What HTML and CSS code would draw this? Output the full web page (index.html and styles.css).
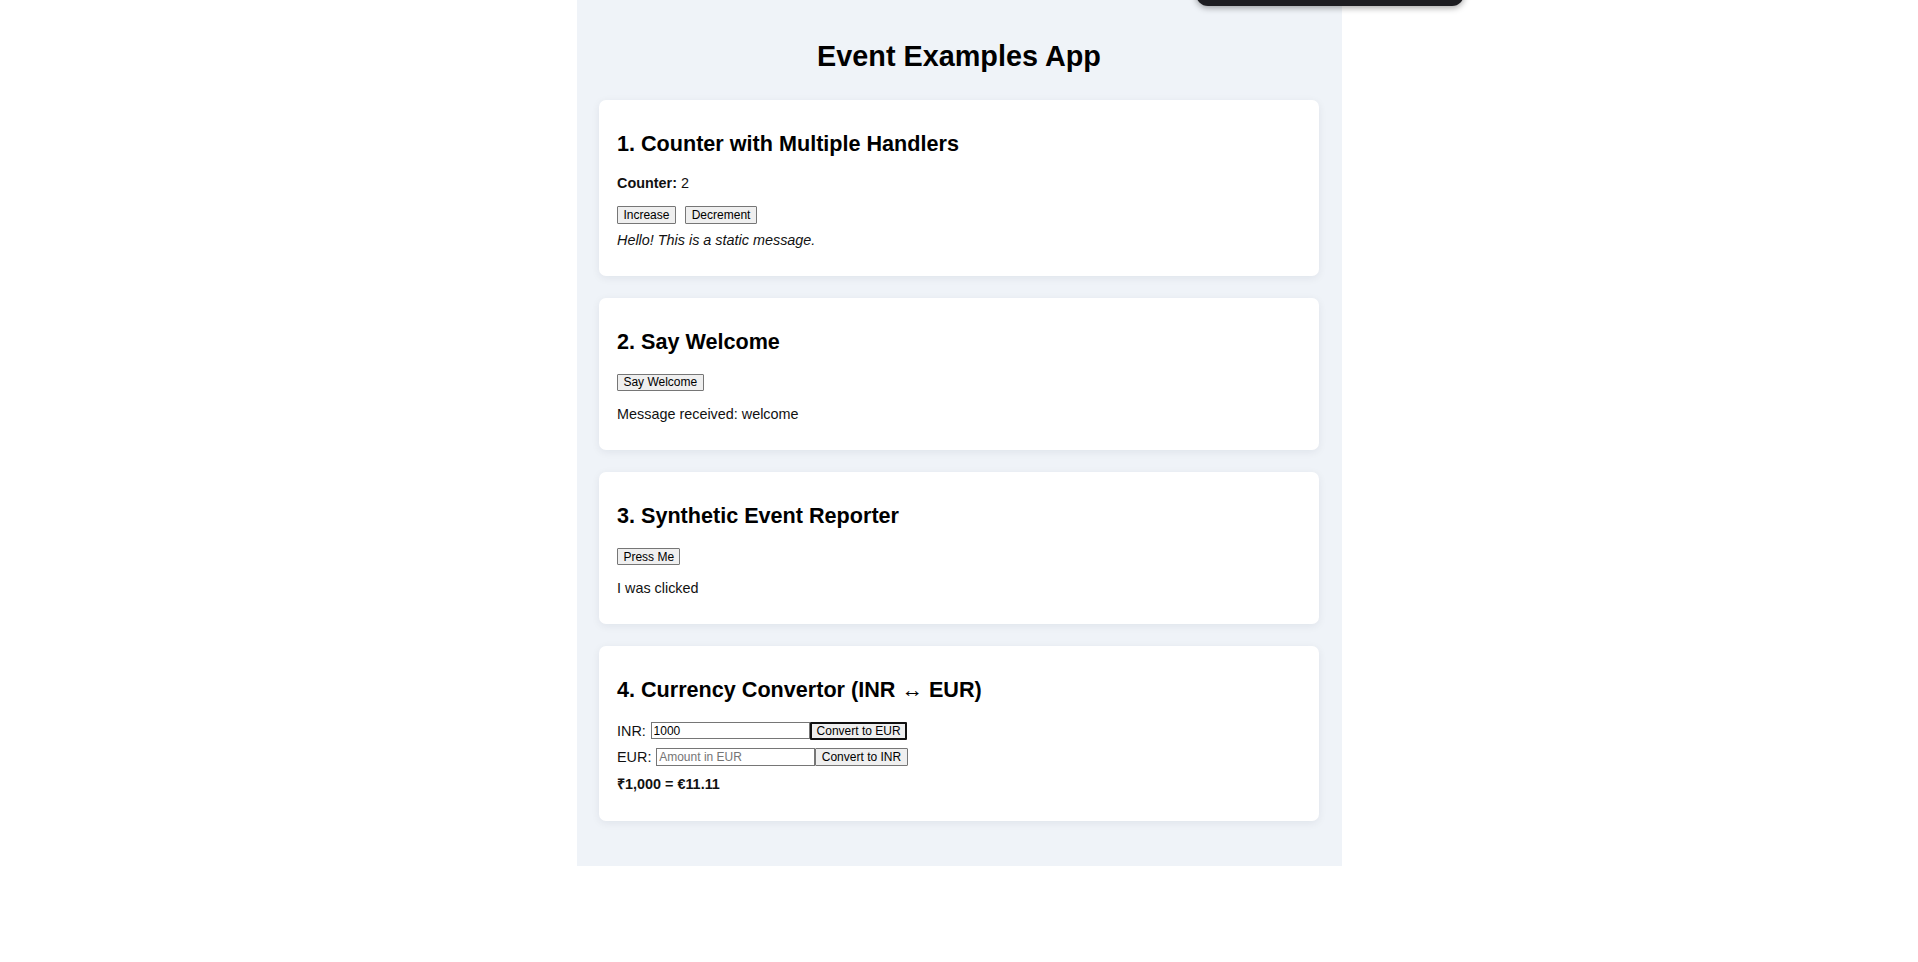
FILE: index.html
```html
<!DOCTYPE html>
<html lang="en">
<head>
<meta charset="utf-8">
<title>Event Examples App</title>
<link rel="stylesheet" href="styles.css">
</head>
<body>
<div class="toolbar"></div>
<main class="app">
  <h1 class="app-title">Event Examples App</h1>

  <section class="card">
    <h2 class="card-title">1. Counter with Multiple Handlers</h2>
    <p class="text"><strong>Counter:</strong> 2</p>
    <div class="btn-row">
      <button class="btn">Increase</button>
      <button class="btn">Decrement</button>
    </div>
    <p class="text static"><em>Hello! This is a static message.</em></p>
  </section>

  <section class="card">
    <h2 class="card-title">2. Say Welcome</h2>
    <div class="btn-row">
      <button class="btn">Say Welcome</button>
    </div>
    <p class="text">Message received: welcome</p>
  </section>

  <section class="card">
    <h2 class="card-title">3. Synthetic Event Reporter</h2>
    <div class="btn-row">
      <button class="btn">Press Me</button>
    </div>
    <p class="text">I was clicked</p>
  </section>

  <section class="card">
    <h2 class="card-title">4. Currency Convertor (INR ↔ EUR)</h2>
    <div class="conv-row">
      <span class="conv-label">INR:</span><input class="conv-input" type="text" value="1000"><button class="btn focused">Convert to EUR</button>
    </div>
    <div class="conv-row">
      <span class="conv-label">EUR:</span><input class="conv-input" type="text" placeholder="Amount in EUR"><button class="btn">Convert to INR</button>
    </div>
    <p class="text result"><strong>₹1,000 = €11.11</strong></p>
  </section>
</main>
</body>
</html>
```

FILE: styles.css
```css
html, body {
  margin: 0;
  padding: 0;
  background: #ffffff;
}

body {
  font-family: "Liberation Sans", Arial, sans-serif;
  font-size: 14.4px;
  color: #111;
}

.toolbar {
  position: fixed;
  top: -30px;
  left: 1196px;
  width: 268px;
  height: 36px;
  border-radius: 12px;
  background: #1d1d21;
  box-shadow: 0 2px 6px rgba(0, 0, 0, 0.35);
  z-index: 10;
}

.app {
  width: 765px;
  margin: 0 auto;
  box-sizing: border-box;
  padding: 20px 22.5px 23px;
  background: #eff3f8;
}

.app-title {
  margin: 19.5px 0 27.5px;
  font-size: 28.8px;
  font-weight: bold;
  text-align: center;
  color: #000;
  line-height: normal;
}

.card {
  background: #fff;
  border-radius: 7px;
  padding: 13.5px 18px;
  margin-bottom: 21.6px;
  box-shadow: 0 2px 8px rgba(20, 30, 60, 0.07);
}

.card-title {
  margin: 17.9px 0;
  font-size: 21.6px;
  font-weight: bold;
  color: #000;
  line-height: normal;
}

.text {
  margin: 14.4px 0;
  line-height: normal;
}

.card-title + .text {
  margin-top: 0;
}

.static {
  margin-top: 7.5px;
}

.btn-row {
  display: flex;
  align-items: center;
  gap: 9.5px;
  height: 19px;
}

.btn {
  font-family: "Liberation Sans", Arial, sans-serif;
  font-size: 12px;
  line-height: normal;
  color: #000;
  background: #efefef;
  border: 1px solid #767676;
  border-radius: 1px;
  padding: 0.9px 5.4px;
  margin: 0;
}

.btn.focused {
  border: 2px solid #111;
  padding: 0 4.8px;
}

.conv-row {
  display: flex;
  align-items: center;
  height: 18.5px;
  margin-bottom: 8px;
}

.conv-label {
  margin-right: 5px;
}

.conv-input {
  width: 159px;
  box-sizing: border-box;
  font-family: "Liberation Sans", Arial, sans-serif;
  font-size: 12px;
  line-height: normal;
  color: #000;
  padding: 0.9px 1.8px;
  border: 1px solid #767676;
  border-radius: 0;
  margin: 0;
  background: #fff;
}

.conv-input::placeholder {
  color: #757575;
}

.result {
  margin-top: 0;
}
```
